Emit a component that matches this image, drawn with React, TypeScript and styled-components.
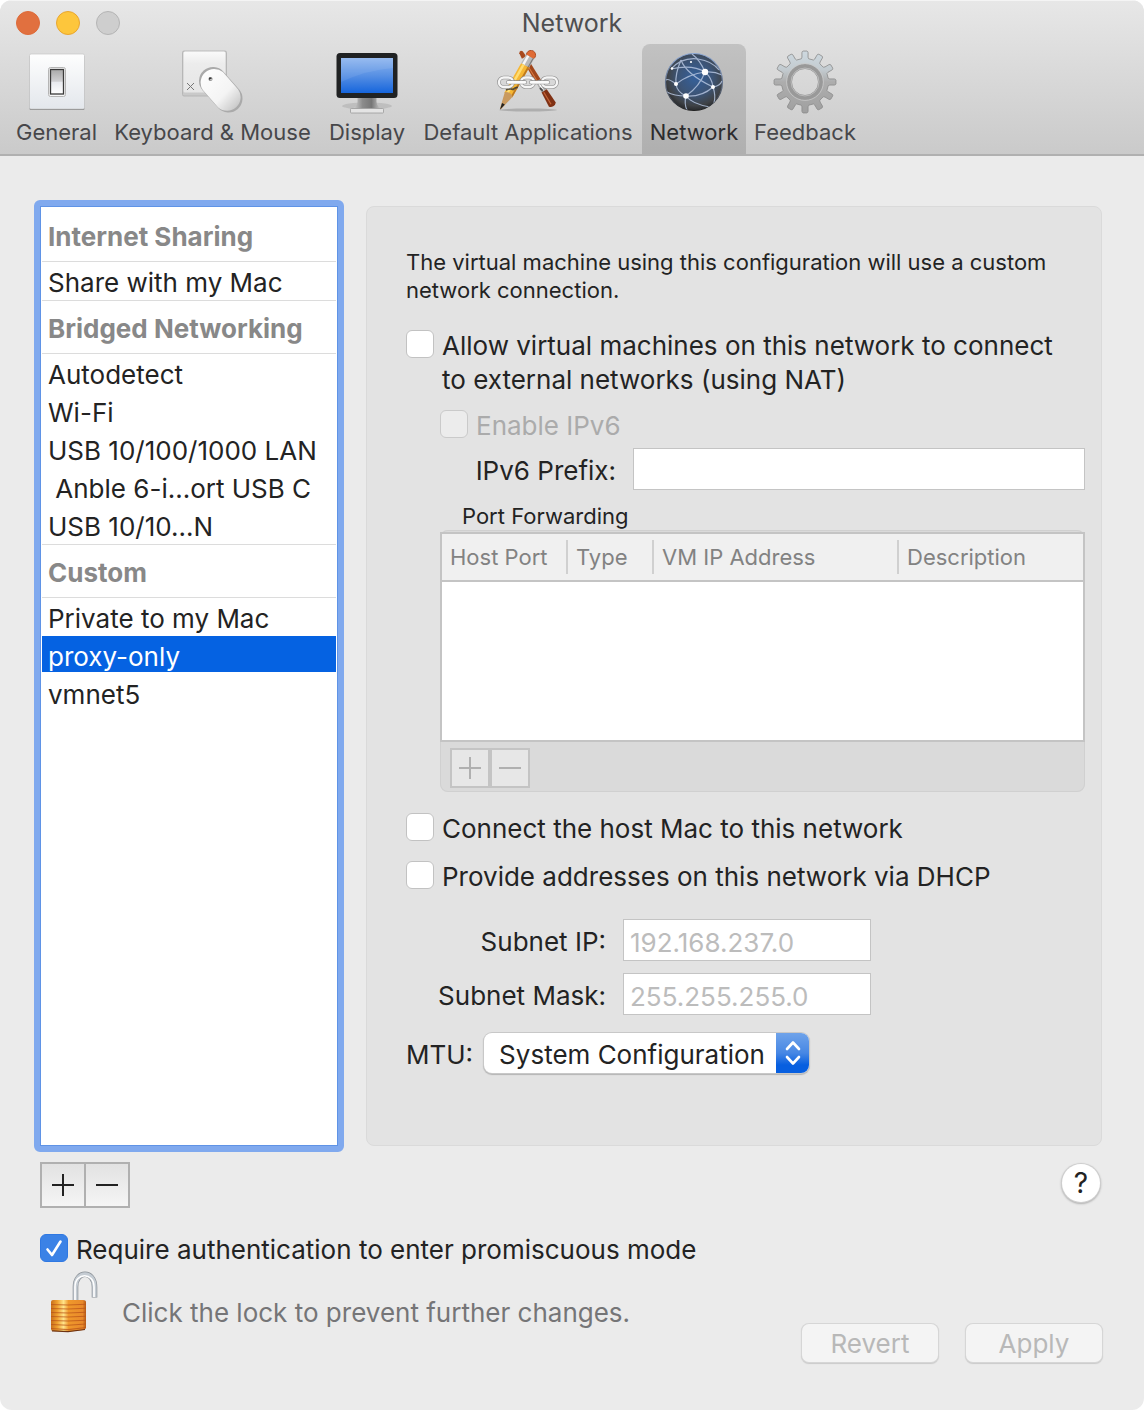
import React, { useState } from "react";
import styled, { createGlobalStyle, css } from "styled-components";

const GlobalStyle = createGlobalStyle`
  *, *::before, *::after { box-sizing: border-box; }
  body { margin: 0; background: #fff; }
  button, input, select { font: inherit; color: inherit; margin: 0; }
`;

const Window = styled.div`
  display: flex;
  flex-direction: column;
  min-height: 100vh;
  overflow: hidden;
  border-radius: 12px;
  background: #ebebeb;
  color: #232323;
  font-family: Inter, "Liberation Sans", sans-serif;
  font-size: 26px;
  line-height: 34px;
`;

/* ---------- title bar and toolbar ---------- */

const Header = styled.header`
  background: linear-gradient(#e7e7e7, #cacaca);
  border-top: 1px solid #f4f4f4;
  border-bottom: 2px solid #b0b0b0;
`;

const TitleBar = styled.div`
  display: grid;
  grid-template-columns: 1fr auto 1fr;
  align-items: center;
  height: 43px;
  padding: 0 16px;
`;

const Lights = styled.div`
  display: flex;
  gap: 16px;
`;

const Light = styled.button<{ $fill: string; $edge: string }>`
  width: 24px;
  height: 24px;
  padding: 0;
  border: 1px solid ${(p) => p.$edge};
  border-radius: 50%;
  background: ${(p) => p.$fill};
`;

const Title = styled.h1`
  margin: 0;
  font-size: 25px;
  font-weight: 400;
  line-height: 34px;
  color: #4e4e50;
`;

const Toolbar = styled.nav`
  display: flex;
  padding-left: 8px;
`;

const Tab = styled.button<{ $active: boolean; $width: number }>`
  display: flex;
  flex: none;
  flex-direction: column;
  align-items: center;
  gap: 4px;
  width: ${(p) => p.$width}px;
  height: 110px;
  padding: 6px 0 0;
  border: 0;
  border-radius: 8px 8px 0 0;
  background: ${(p) => (p.$active ? "rgba(0, 0, 0, 0.13)" : "transparent")};
  color: ${(p) => (p.$active ? "#2c2c2e" : "#47474a")};
  font-size: 22px;
  line-height: 28px;
  white-space: nowrap;
`;

/* ---------- body ---------- */

const Body = styled.main`
  display: grid;
  grid-template-columns: 310px minmax(0, 1fr);
  column-gap: 22px;
  padding: 44px 42px 0 34px;
`;

const NetworkList = styled.div`
  min-height: 952px;
  padding: 2px;
  border: 6px solid #80a9ee;
  border-radius: 6px;
  background: #fff;
  box-shadow: inset 0 0 0 1px #5f93e6;
`;

const GroupTitle = styled.h2`
  height: 54px;
  margin: 0;
  padding: 3px 6px 0;
  border-top: 1px solid #dcdcdc;
  border-bottom: 1px solid #dcdcdc;
  color: #888;
  font-size: 26px;
  font-weight: 700;
  line-height: 50px;

  section:first-child > & {
    border-top-color: transparent;
  }
`;

const Rows = styled.ul`
  margin: 0;
  padding: 0;
  list-style: none;
`;

const Row = styled.button<{ $selected: boolean }>`
  display: block;
  width: 100%;
  height: 38px;
  padding: 4px 6px 0;
  border: 0;
  border-bottom: 2px solid #fff;
  background: ${(p) => (p.$selected ? "#0562e2" : "#fff")};
  color: ${(p) => (p.$selected ? "#fff" : "#232323")};
  line-height: 34px;
  text-align: left;
  white-space: pre;
`;

const Panel = styled.section`
  margin: 6px 0;
  padding: 41px 16px 0 39px;
  border: 1px solid #dadada;
  border-radius: 8px;
  background: #e3e3e3;
`;

const Description = styled.p`
  max-width: 660px;
  margin: 0 0 24px;
  font-size: 22px;
  line-height: 28px;
`;

const CheckRow = styled.label<{ $gap?: number; $indent?: boolean; $muted?: boolean }>`
  display: flex;
  align-items: flex-start;
  gap: 8px;
  margin-top: ${(p) => p.$gap ?? 0}px;
  margin-left: ${(p) => (p.$indent ? 34 : 0)}px;
  color: ${(p) => (p.$muted ? "#ababab" : "inherit")};
`;

const CheckText = styled.span`
  max-width: 632px;
  padding-top: 1px;
`;

const BoxWrap = styled.span`
  display: grid;
  flex: none;
  margin-top: 2px;

  > * {
    grid-area: 1 / 1;
    place-self: center;
  }

  > svg {
    pointer-events: none;
  }
`;

const Box = styled.input`
  appearance: none;
  width: 28px;
  height: 28px;
  border: 1px solid #c2c2c2;
  border-radius: 6px;
  background: #fff;

  &:checked {
    border-color: #2f78e2;
    background: #3b82e6;
  }

  &:disabled {
    background: #ececec;
    border-color: #cacaca;
  }
`;

const fieldBox = css`
  height: 42px;
  border: 1px solid #c4c4c4;
  border-radius: 0;
  background: #fff;
`;

const TextInput = styled.input`
  ${fieldBox}
  min-width: 0;
  width: 100%;
  padding: 5px 6px 0;

  &::placeholder {
    color: #bcbcbc;
    opacity: 1;
  }
`;

const PrefixRow = styled.div`
  display: grid;
  grid-template-columns: 210px 1fr;
  column-gap: 17px;
  align-items: center;
  margin-top: 5px;

  > label {
    padding-top: 4px;
    text-align: right;
  }
`;

const SubnetGrid = styled.div`
  display: grid;
  grid-template-columns: 200px 248px;
  gap: 12px 17px;
  align-items: center;
  margin-top: 25px;

  > label {
    padding-top: 4px;
    text-align: right;
    white-space: nowrap;
  }
`;

const Forwarding = styled.section`
  margin: 12px 0 0 34px;
`;

const ForwardingTitle = styled.h3`
  margin: 0 0 0 22px;
  font-size: 22px;
  font-weight: 400;
  line-height: 28px;
`;

const ForwardingFrame = styled.div`
  padding-top: 2px;
  border-radius: 8px;
  background: #dadada;
  box-shadow: inset 0 0 0 1px #d0d0d0;
`;

const Table = styled.table`
  width: 100%;
  height: 210px;
  border: 2px solid #c4c4c4;
  border-spacing: 0;
  table-layout: fixed;
  background: #fff;

  td {
    padding: 0;
  }
`;

const HeadCell = styled.th<{ $width?: number }>`
  width: ${(p) => (p.$width ? `${p.$width}px` : "auto")};
  height: 48px;
  padding: 0;
  border-bottom: 2px solid #c4c4c4;
  background: #f0f0f0;
  color: #828282;
  font-size: 22px;
  font-weight: 400;
  text-align: left;
  white-space: nowrap;

  > span {
    display: block;
    padding-left: 8px;
    border-left: 2px solid #d0d0d0;
  }

  &:first-child > span {
    border-left: 0;
  }
`;

const TableTools = styled.div`
  display: flex;
  padding: 6px 10px 4px;
`;

const TableTool = styled.button`
  display: grid;
  place-items: center;
  width: 40px;
  height: 40px;
  padding: 0;
  border: 2px solid #c4c4c4;
  background: #e7e7e7;
  color: #b2b2b2;
`;

const MtuRow = styled.div`
  display: flex;
  align-items: center;
  gap: 11px;
  margin-top: 18px;

  > label {
    padding-top: 3px;
  }
`;

const SelectWrap = styled.div`
  display: grid;
  border-radius: 8px;
  overflow: hidden;
  box-shadow: 0 0 0 1px #c8c8c8, 0 1px 1px 1px #b4b4b4;
  background: #fff;

  > * {
    grid-area: 1 / 1;
  }
`;

const Select = styled.select`
  appearance: none;
  width: 325px;
  height: 40px;
  padding: 3px 40px 0 15px;
  border: 0;
  background: transparent;
`;

const Stepper = styled.span`
  display: grid;
  place-items: center;
  justify-self: end;
  width: 33px;
  background: linear-gradient(#6fa3ea, #4787e4 50%, #075fe0 80%);
  pointer-events: none;
`;

/* ---------- below the panels ---------- */

const Footer = styled.footer`
  padding: 10px 42px 47px 40px;
`;

const FooterTop = styled.div`
  display: flex;
  align-items: flex-start;
  justify-content: space-between;
`;

const ListTools = styled.div`
  display: flex;
  border: 2px solid #b0b0b0;
`;

const ListTool = styled.button`
  display: grid;
  place-items: center;
  width: 42px;
  height: 42px;
  padding: 0;
  border: 0;
  background: linear-gradient(#e2e2e2, #f5f5f5);

  & + & {
    width: 44px;
    border-left: 2px solid #b0b0b0;
  }
`;

const Help = styled.button`
  width: 38px;
  height: 38px;
  margin: 2px 2px 0;
  padding: 0;
  border: 0;
  border-radius: 50%;
  background: #fff;
  box-shadow: 0 0 0 1px #cfcfcf, 0 1px 2px 1px #b0b0b0;
  font-size: 28px;
  line-height: 38px;
`;

const FooterBottom = styled.div`
  display: flex;
  align-items: flex-start;
  justify-content: space-between;
  margin-top: 1px;
`;

const LockRow = styled.div`
  display: flex;
  align-items: center;
  gap: 22px;
  padding-left: 8px;
  color: #757577;

  > span {
    padding-top: 24px;
  }
`;

const LockButton = styled.button`
  display: block;
  height: 66px;
  padding: 0;
  border: 0;
  background: none;
`;

const Actions = styled.div`
  display: flex;
  gap: 28px;
  padding-top: 56px;
`;

const Action = styled.button`
  width: 136px;
  height: 38px;
  padding: 2px 0 0;
  border: 0;
  border-radius: 7px;
  background: #f4f4f4;
  box-shadow: 0 0 0 1px #d6d6d6, 0 1px 1px 1px #cacaca;
  color: #b8b8b8;
`;

/* ---------- drawings ---------- */

const Sign = ({ plus, thin }: { plus?: boolean; thin?: boolean }) => (
  <svg width="22" height="22" viewBox="0 0 22 22" stroke={thin ? "#b0b0b0" : "#222"} strokeWidth="2" aria-hidden="true">
    <path d={plus ? "M0 11H22M11 0V22" : "M0 11H22"} />
  </svg>
);

const GeneralIcon = () => (
  <svg width="64" height="64" viewBox="0 0 64 64" aria-hidden="true">
    <defs>
      <linearGradient id="plate" x2="0" y2="1"><stop stopColor="#fefefe" /><stop offset="1" stopColor="#e3e7ec" /></linearGradient>
      <linearGradient id="rocker" x2="0" y2="1"><stop stopColor="#a9a9a9" /><stop offset=".48" stopColor="#d0d0d2" /><stop offset=".52" stopColor="#e8eaee" /><stop offset="1" stopColor="#fff" /></linearGradient>
    </defs>
    <rect x="4.5" y="5" width="55" height="55" rx="1.5" fill="#858585" />
    <rect x="4.5" y="4" width="55" height="55" rx="1.5" fill="url(#plate)" stroke="#c6c6c6" strokeWidth=".7" />
    <rect x="23.5" y="17.5" width="17" height="29" rx="2" fill="#f7f7f7" stroke="#b5b5b5" />
    <rect x="25.5" y="19.5" width="13" height="24.5" fill="url(#rocker)" stroke="#3a3a3a" strokeWidth="1.3" />
  </svg>
);

const KeyboardIcon = () => (
  <svg width="64" height="64" viewBox="1 0 64 64" aria-hidden="true">
    <defs>
      <linearGradient id="key" x2="0" y2="1"><stop stopColor="#fafafa" /><stop offset=".3" stopColor="#ececec" /><stop offset="1" stopColor="#e6e6e6" /></linearGradient>
      <linearGradient id="mouse" x1="0" y1="0" x2="1" y2="1"><stop stopColor="#fff" /><stop offset=".6" stopColor="#f4f4f4" /><stop offset="1" stopColor="#bdbdbd" /></linearGradient>
    </defs>
    <rect x="2.5" y="1" width="44" height="45" rx="1.5" fill="#c9c9c9" stroke="#b0b0b0" strokeWidth=".8" />
    <rect x="3.5" y="1.5" width="42" height="41" rx="1.5" fill="url(#key)" />
    <path d="M7 33l7 7M14 33l-7 7" stroke="#777" strokeWidth="1" />
    <path d="M33 31L48.5 48.5" stroke="#aaa" strokeWidth="28" strokeLinecap="round" />
    <path d="M42.9 22.1L58.2 39.4A13.6 13.6 0 0 1 38.2 57.5L22.9 40.1A13.6 13.6 0 0 1 42.9 22.1Z" fill="url(#mouse)" />
    <circle cx="30.5" cy="29" r="2" fill="#777" /><circle cx="30" cy="28.5" r="1" fill="#333" /><circle cx="31" cy="29.8" r=".8" fill="#eee" />
  </svg>
);

const DisplayIcon = () => (
  <svg width="64" height="64" viewBox="0 0 64 64" aria-hidden="true">
    <defs>
      <linearGradient id="screen" x2="0" y2="1"><stop stopColor="#8fb6ef" /><stop offset=".5" stopColor="#5790e4" /><stop offset="1" stopColor="#1665dc" /></linearGradient>
      <linearGradient id="stand" x2="1" y2="0"><stop stopColor="#d8d8d8" /><stop offset=".35" stopColor="#8c8c8c" /><stop offset=".65" stopColor="#777" /><stop offset="1" stopColor="#d2d2d2" /></linearGradient>
    </defs>
    <ellipse cx="32" cy="56" rx="25" ry="3.5" fill="#999" opacity=".35" />
    <path d="M22.5 48H41.5V52Q42 57 47 58.5H17Q22 57 22.5 52Z" fill="url(#stand)" />
    <rect x="15.5" y="58.5" width="33" height="4.5" rx=".8" fill="#e4e4e4" stroke="#9b9b9b" strokeWidth=".8" />
    <rect x="1.5" y="3" width="61" height="45" rx="3.5" fill="#202223" />
    <rect x="6" y="8" width="52" height="35" fill="url(#screen)" />
    <path d="M6 8H58V18Q32 20 6 32Z" fill="#fff" opacity=".08" />
  </svg>
);

const AppsIcon = () => (
  <svg width="64" height="64" viewBox="0 0 64 64" aria-hidden="true">
    <ellipse cx="32" cy="60" rx="29" ry="1.5" fill="#777" opacity=".4" />
    <g transform="rotate(-31 26 4)">
      <path d="M24 2Q26 -1 28 2L28.5 8H23.5Z" fill="#a84a1e" />
      <path d="M23.5 10H28.5L29 36H23Z" fill="#a1471c" /><path d="M25 10V36" stroke="#dc7b42" />
      <path d="M23.5 35H28.5L29 47H23Z" fill="#ababab" /><path d="M25.5 35V47" stroke="#fff" strokeWidth="1.5" />
      <path d="M23 47H29L30 63Q26 67 22 63Z" fill="#803114" /><path d="M25 48V62" stroke="#c36438" strokeWidth="1.3" />
    </g>
    <g transform="rotate(29.5 35 5)">
      <circle cx="35" cy="5" r="4.6" fill="#df6b35" stroke="#a7441b" strokeWidth=".8" />
      <rect x="30.4" y="7" width="9.2" height="10" fill="#b9b9b9" /><path d="M33 7V17" stroke="#f7f7f7" strokeWidth="2.5" /><path d="M38.5 7V17" stroke="#777" />
      <rect x="30.4" y="17" width="9.2" height="34" fill="#f6b733" /><path d="M33.2 17V51" stroke="#ffdd72" strokeWidth="2.4" /><path d="M38.7 17V51" stroke="#bd781f" strokeWidth="1.8" />
      <path d="M30.4 50Q35 47 39.6 50L35.6 67H34.4Z" fill="#c99a5f" /><path d="M33.4 61H36.6L35 68Z" fill="#222" />
    </g>
    <path d="M10 40Q14 38 17 39.5Q20 37 22 37.5M44 38L47 41" stroke="#333" strokeWidth="1.8" fill="none" opacity=".8" />
    {[{ x: 3, w: 14 }, { x: 25, w: 13 }, { x: 46, w: 15 }].map((l) => (
      <g key={l.x} fill="none">
        <rect x={l.x} y="27.5" width={l.w} height="9.5" rx="4.7" stroke="#8c8c8c" strokeWidth="3.6" />
        <rect x={l.x} y="27.5" width={l.w} height="9.5" rx="4.7" stroke="#f5f5f5" strokeWidth="2.4" />
      </g>
    ))}
    <path d="M12 32.3H29M35 32.3H52" stroke="#8c8c8c" strokeWidth="4" strokeLinecap="round" />
    <path d="M12 32.3H29M35 32.3H52" stroke="#fbfbfb" strokeWidth="2.8" strokeLinecap="round" />
  </svg>
);

const GlobeIcon = () => (
  <svg width="64" height="64" viewBox="0 0 64 64" aria-hidden="true">
    <defs>
      <radialGradient id="globe" cx=".52" cy=".42" r=".58"><stop stopColor="#36619c" /><stop offset=".55" stopColor="#3d5474" /><stop offset=".85" stopColor="#404347" /><stop offset="1" stopColor="#292b2e" /></radialGradient>
      <linearGradient id="rim" x2="0" y2="1"><stop stopColor="#8ba8d6" /><stop offset=".6" stopColor="#5f6b80" /><stop offset="1" stopColor="#222" /></linearGradient>
      <clipPath id="disc"><circle cx="32" cy="32" r="28.5" /></clipPath>
    </defs>
    <circle cx="32" cy="32" r="28.5" fill="url(#globe)" stroke="url(#rim)" strokeWidth="1.2" />
    <g clipPath="url(#disc)" fill="none" stroke="#b4c4df" strokeWidth="1.2" opacity=".85">
      <path d="M43 22Q30 14 9 19M43 22Q38 10 30 4M43 22Q27 24 14 34M43 22Q38 36 24 46M43 22Q50 28 51 37M43 22Q52 21 60 25" />
      <path d="M24 46Q15 42 14 34Q13 24 19 10M24 46Q40 47 51 37M24 46Q30 54 48 57M24 46Q22 54 25 60M24 46Q12 46 5 42" />
      <path d="M19 10Q24 24 51 37M51 37Q58 36 60 31M51 37Q54 46 52 53M9 19Q20 7 36 9Q50 11 57 20M14 34Q6 28 4 30" />
    </g>
    <g fill="#fff">
      <circle cx="43" cy="22" r="3.2" /><circle cx="24" cy="46" r="2.8" /><circle cx="51" cy="37" r="2" /><circle cx="14" cy="34" r="2" /><circle cx="10" cy="18.5" r="1.2" /><circle cx="29" cy="12" r="1.1" />
    </g>
  </svg>
);

const gearOutline = (() => {
  const teeth = 12;
  const at = (r: number, deg: number) => {
    const a = ((deg - 90) * Math.PI) / 180;
    return `${(32 + r * Math.cos(a)).toFixed(2)} ${(32 + r * Math.sin(a)).toFixed(2)}`;
  };
  let d = "";
  for (let i = 0; i < teeth; i++) {
    const c = (i * 360) / teeth;
    d += `${i ? "L" : "M"}${at(23.5, c - 9)}L${at(25, c - 7)}L${at(29.5, c - 6)}Q${at(30.8, c - 5.5)} ${at(31, c - 3.5)}L${at(31, c + 3.5)}Q${at(30.8, c + 5.5)} ${at(29.5, c + 6)}L${at(25, c + 7)}L${at(23.5, c + 9)}`;
  }
  return `${d}ZM45.5 32A13.5 13.5 0 1 0 18.5 32A13.5 13.5 0 1 0 45.5 32Z`;
})();

const GearIcon = () => (
  <svg width="64" height="64" viewBox="0 0 64 64" aria-hidden="true">
    <defs>
      <linearGradient id="gear" x2="0" y2="1"><stop stopColor="#ced9e0" /><stop offset=".3" stopColor="#c3cbd0" /><stop offset=".5" stopColor="#adadad" /><stop offset="1" stopColor="#a0a0a0" /></linearGradient>
    </defs>
    <path d={gearOutline} fill="url(#gear)" stroke="#8a8a8a" strokeWidth=".8" fillRule="evenodd" />
    <circle cx="32" cy="32" r="16" fill="none" stroke="#999" strokeWidth="4" />
    <circle cx="32" cy="32" r="18.4" fill="none" stroke="#c9c9c9" strokeWidth=".8" />
    <circle cx="32" cy="32" r="14" fill="none" stroke="#b9b9b9" strokeWidth="1" />
  </svg>
);

const LockIcon = () => (
  <svg width="52" height="66" viewBox="0 0 52 66" aria-hidden="true">
    <defs>
      <linearGradient id="brass" x2="1" y2="0"><stop stopColor="#c8701c" /><stop offset=".18" stopColor="#f0a02e" /><stop offset=".36" stopColor="#ffe48a" /><stop offset=".5" stopColor="#f0992c" /><stop offset=".9" stopColor="#e8892a" /><stop offset="1" stopColor="#b55a18" /></linearGradient>
    </defs>
    <path d="M27.5 35V19C27.5 2 46.5 2 46.5 19V29.5" fill="none" stroke="#8b9197" strokeWidth="5.6" />
    <path d="M27.5 35V19C27.5 2 46.5 2 46.5 19V29" fill="none" stroke="#c5ccd3" strokeWidth="4.2" />
    <path d="M27 35V19C27 4 46 4 46 19V29" fill="none" stroke="#fff" strokeWidth="1.6" />
    <path d="M3 34Q3 32 5 32L35 32Q38 32 38 34V59Q38 61.5 35 62L20 63.8L5 63Q3 63 3 61Z" fill="url(#brass)" />
    <path d="M3 36.5L20 37L38 36.2M3 40.5L20 41L38 40.2M3 44.5L20 45L38 44.2M3 48.5L20 49L38 48.2M3 52.5L20 53L38 52.2M3 56.5L20 57.2L38 56M3 60.5L20 61.6L38 59.5" fill="none" stroke="#b9541a" strokeWidth="1.1" opacity=".75" />
    <path d="M4 62.8L20 63.6L37 61.5" fill="none" stroke="#6e3211" strokeWidth="1.2" />
  </svg>
);

/* ---------- data ---------- */

const tabs = [
  { label: "General", Icon: GeneralIcon, width: 97 },
  { label: "Keyboard & Mouse", Icon: KeyboardIcon, width: 215 },
  { label: "Display", Icon: DisplayIcon, width: 94 },
  { label: "Default Applications", Icon: AppsIcon, width: 228 },
  { label: "Network", Icon: GlobeIcon, width: 104 },
  { label: "Feedback", Icon: GearIcon, width: 118 },
];

const groups = [
  { title: "Internet Sharing", rows: ["Share with my Mac"] },
  { title: "Bridged Networking", rows: ["Autodetect", "Wi-Fi", "USB 10/100/1000 LAN", " Anble 6-i...ort USB C", "USB 10/10...N"] },
  { title: "Custom", rows: ["Private to my Mac", "proxy-only", "vmnet5"] },
];

type CheckProps = {
  children: React.ReactNode;
  gap?: number;
  indent?: boolean;
  disabled?: boolean;
  initial?: boolean;
};

function Check({ children, gap, indent, disabled, initial = false }: CheckProps) {
  const [on, setOn] = useState(initial);
  return (
    <CheckRow $gap={gap} $indent={indent} $muted={disabled}>
      <BoxWrap>
        <Box type="checkbox" checked={on} disabled={disabled} onChange={(e) => setOn(e.target.checked)} />
        {on && (
          <svg width="20" height="20" viewBox="0 0 20 20" fill="none" stroke="#fff" strokeWidth="2.6" strokeLinecap="round" strokeLinejoin="round" aria-hidden="true">
            <path d="M3.5 11.5L8 17L16.5 3.5" />
          </svg>
        )}
      </BoxWrap>
      <CheckText>{children}</CheckText>
    </CheckRow>
  );
}

export default function App() {
  const [tab, setTab] = useState("Network");
  const [selected, setSelected] = useState("proxy-only");

  return (
    <>
      <GlobalStyle />
      <Window>
        <Header>
          <TitleBar>
            <Lights>
              <Light $fill="#e1703f" $edge="#dd6b3a" aria-label="Close" />
              <Light $fill="#fdc63c" $edge="#e8a630" aria-label="Minimize" />
              <Light $fill="#cecece" $edge="#b4b4b4" aria-label="Zoom" />
            </Lights>
            <Title>Network</Title>
          </TitleBar>
          <Toolbar>
            {tabs.map(({ label, Icon, width }) => (
              <Tab key={label} $active={tab === label} $width={width} onClick={() => setTab(label)}>
                <Icon />
                {label}
              </Tab>
            ))}
          </Toolbar>
        </Header>

        <Body>
          <NetworkList>
            {groups.map((group) => (
              <section key={group.title}>
                <GroupTitle>{group.title}</GroupTitle>
                <Rows>
                  {group.rows.map((row) => (
                    <li key={row}>
                      <Row $selected={selected === row} onClick={() => setSelected(row)}>{row}</Row>
                    </li>
                  ))}
                </Rows>
              </section>
            ))}
          </NetworkList>

          <Panel>
            <Description>The virtual machine using this configuration will use a custom network connection.</Description>
            <Check>Allow virtual machines on this network to connect to external networks (using NAT)</Check>
            <Check gap={11} indent disabled>Enable IPv6</Check>
            <PrefixRow>
              <label htmlFor="prefix">IPv6 Prefix:</label>
              <TextInput id="prefix" />
            </PrefixRow>

            <Forwarding aria-labelledby="forwarding">
              <ForwardingTitle id="forwarding">Port Forwarding</ForwardingTitle>
              <ForwardingFrame>
                <Table>
                  <thead>
                    <tr>
                      <HeadCell $width={124}><span>Host Port</span></HeadCell>
                      <HeadCell $width={86}><span>Type</span></HeadCell>
                      <HeadCell $width={245}><span>VM IP Address</span></HeadCell>
                      <HeadCell><span>Description</span></HeadCell>
                    </tr>
                  </thead>
                  <tbody>
                    <tr><td colSpan={4} /></tr>
                  </tbody>
                </Table>
                <TableTools>
                  <TableTool disabled aria-label="Add rule"><Sign plus thin /></TableTool>
                  <TableTool disabled aria-label="Remove rule"><Sign thin /></TableTool>
                </TableTools>
              </ForwardingFrame>
            </Forwarding>

            <Check gap={19}>Connect the host Mac to this network</Check>
            <Check gap={13}>Provide addresses on this network via DHCP</Check>

            <SubnetGrid>
              <label htmlFor="subnet-ip">Subnet IP:</label>
              <TextInput id="subnet-ip" placeholder="192.168.237.0" />
              <label htmlFor="subnet-mask">Subnet Mask:</label>
              <TextInput id="subnet-mask" placeholder="255.255.255.0" />
            </SubnetGrid>

            <MtuRow>
              <label htmlFor="mtu">MTU:</label>
              <SelectWrap>
                <Select id="mtu"><option>System Configuration</option></Select>
                <Stepper>
                  <svg width="16" height="26" viewBox="0 0 16 26" fill="none" stroke="#fff" strokeWidth="2.6" strokeLinecap="round" strokeLinejoin="round" aria-hidden="true">
                    <path d="M2 9L8 2.5L14 9M2 17L8 23.5L14 17" />
                  </svg>
                </Stepper>
              </SelectWrap>
            </MtuRow>
          </Panel>
        </Body>

        <Footer>
          <FooterTop>
            <ListTools>
              <ListTool aria-label="Add network"><Sign plus /></ListTool>
              <ListTool aria-label="Remove network"><Sign /></ListTool>
            </ListTools>
            <Help>?</Help>
          </FooterTop>
          <Check gap={24} initial>Require authentication to enter promiscuous mode</Check>
          <FooterBottom>
            <LockRow>
              <LockButton aria-label="Lock"><LockIcon /></LockButton>
              <span>Click the lock to prevent further changes.</span>
            </LockRow>
            <Actions>
              <Action disabled>Revert</Action>
              <Action disabled>Apply</Action>
            </Actions>
          </FooterBottom>
        </Footer>
      </Window>
    </>
  );
}
